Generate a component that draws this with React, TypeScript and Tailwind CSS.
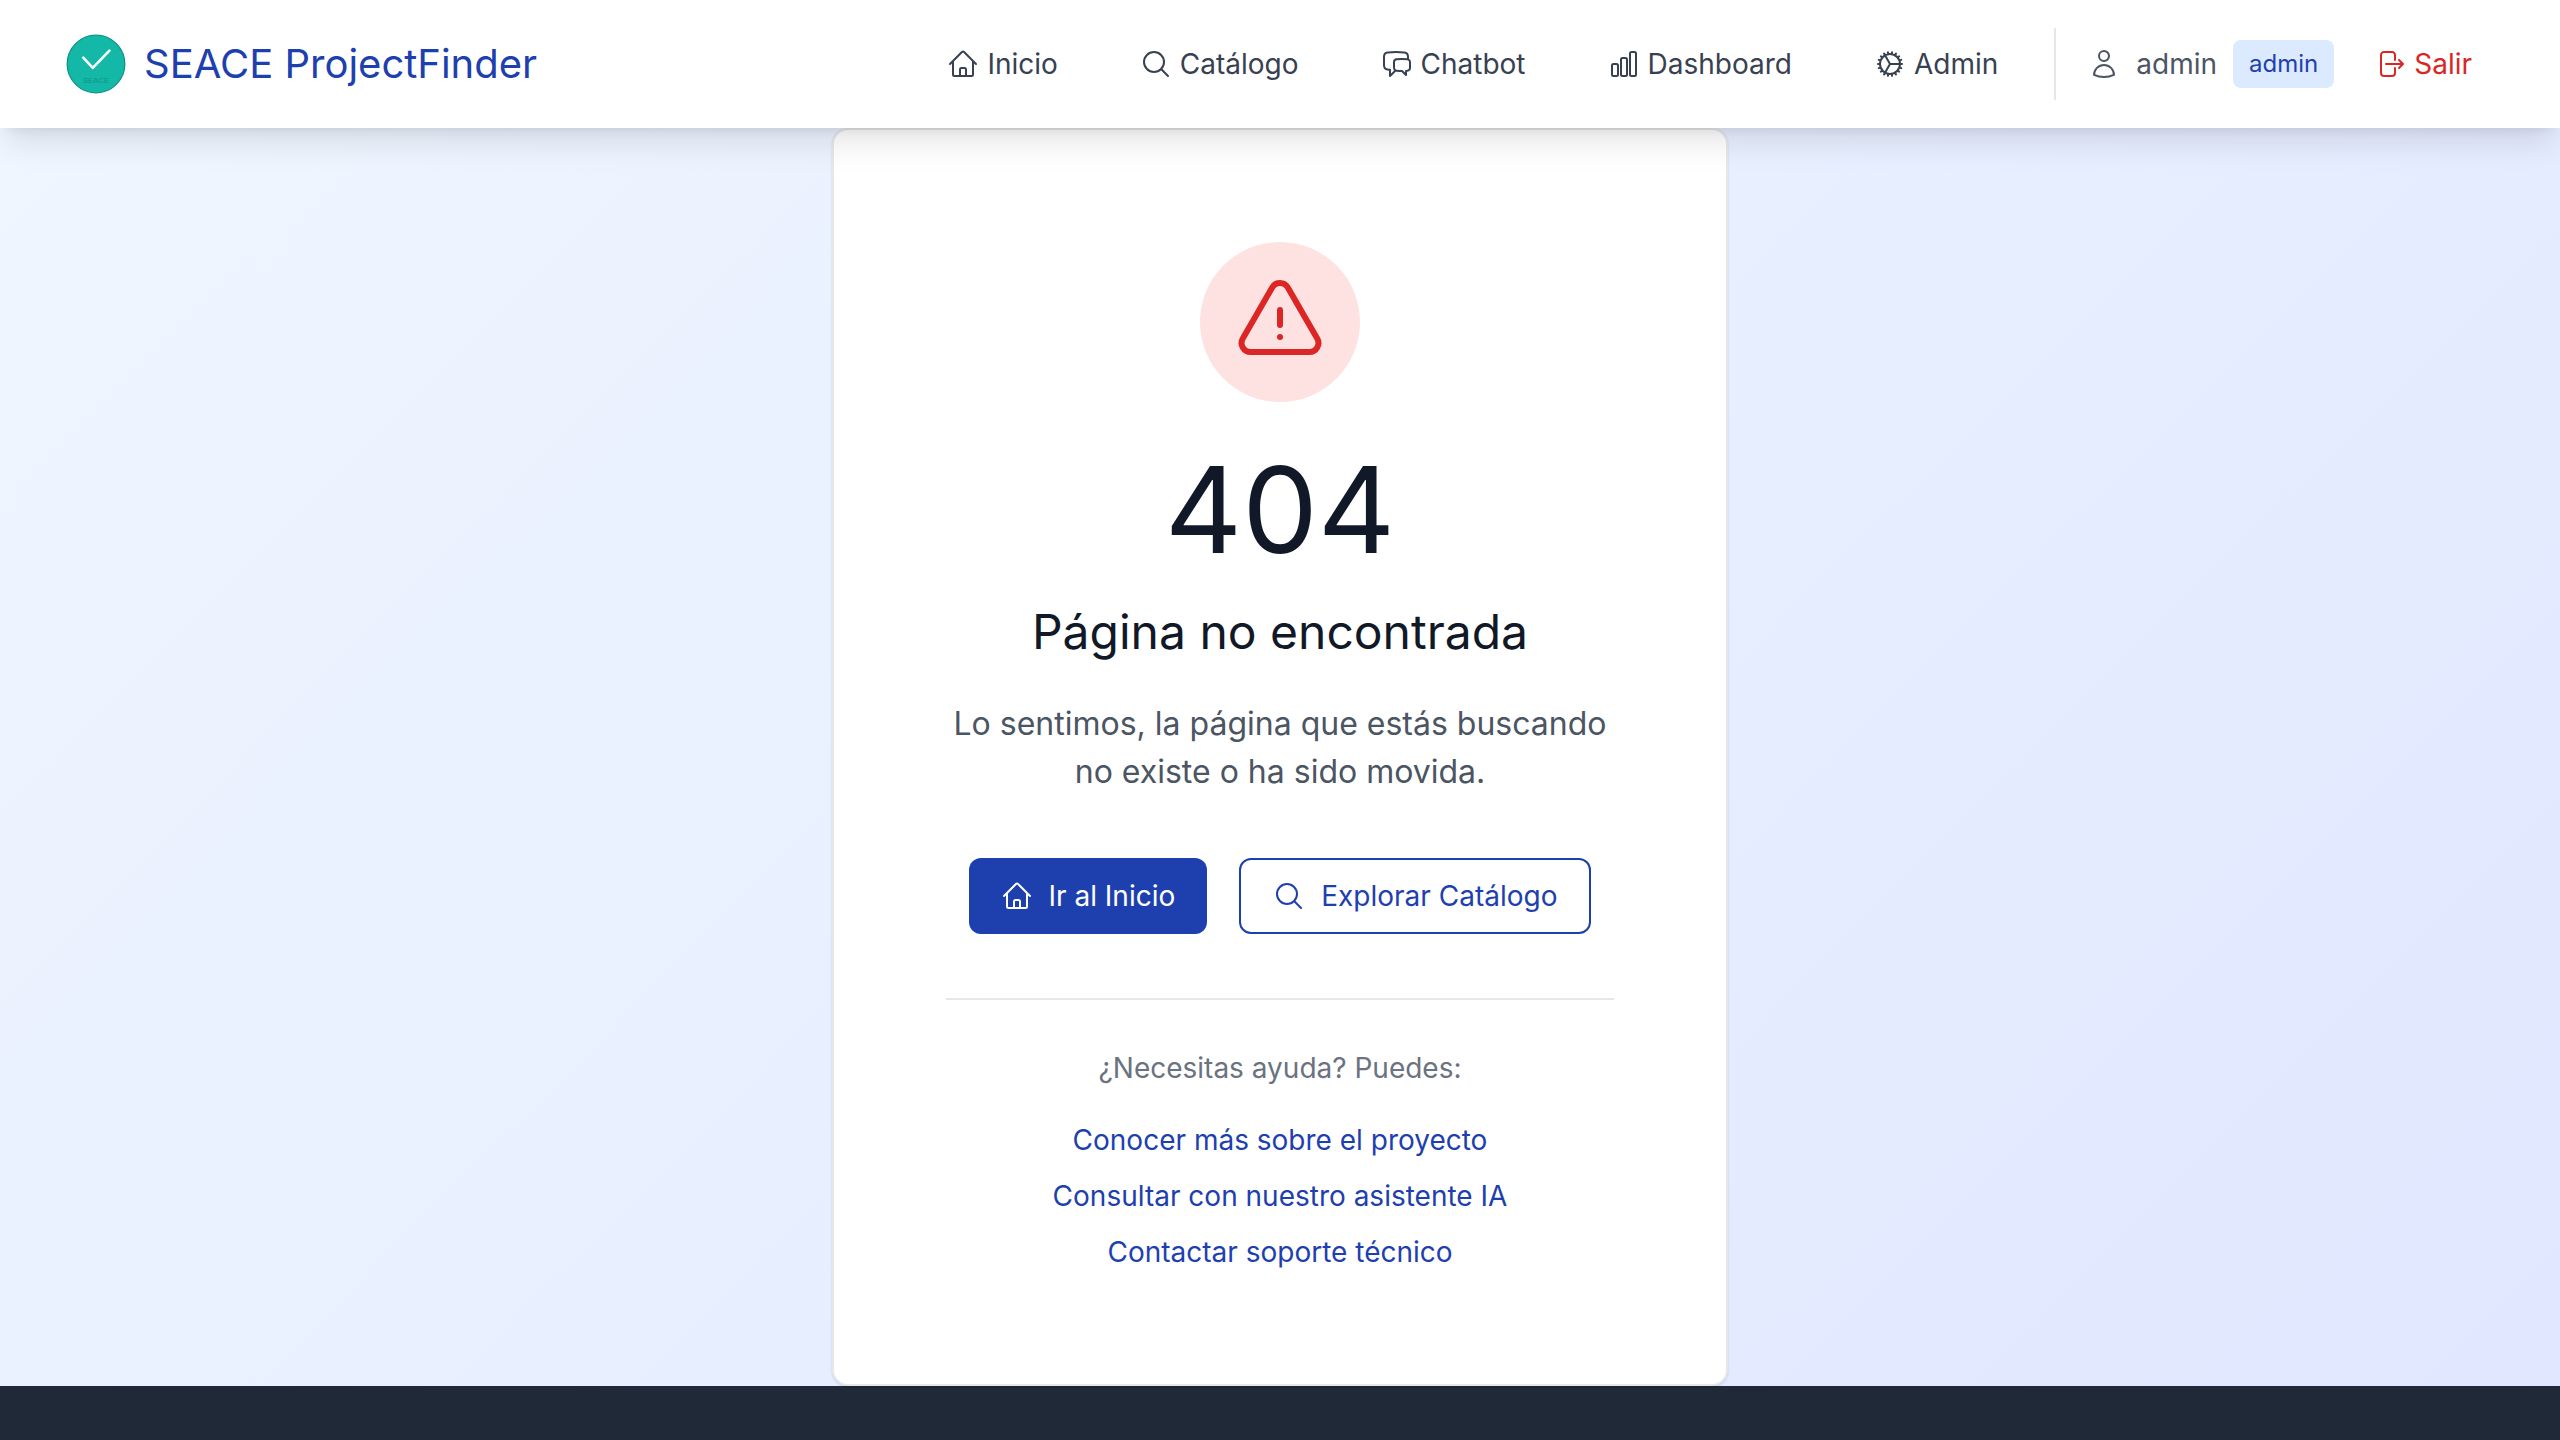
import type { ComponentType, ReactNode } from "react";
import {
  HiOutlineArrowRightOnRectangle,
  HiOutlineChartBar,
  HiOutlineChatBubbleLeftRight,
  HiOutlineCog,
  HiOutlineExclamationTriangle,
  HiOutlineHome,
  HiOutlineMagnifyingGlass,
  HiOutlineUser,
} from "react-icons/hi2";

type Icon = ComponentType<{ className?: string }>;

const navItems: { label: string; icon: Icon }[] = [
  { label: "Inicio", icon: HiOutlineHome },
  { label: "Catálogo", icon: HiOutlineMagnifyingGlass },
  { label: "Chatbot", icon: HiOutlineChatBubbleLeftRight },
  { label: "Dashboard", icon: HiOutlineChartBar },
  { label: "Admin", icon: HiOutlineCog },
];

const helpLinks = [
  "Conocer más sobre el proyecto",
  "Consultar con nuestro asistente IA",
  "Contactar soporte técnico",
];

function Logo() {
  return (
    <svg viewBox="0 0 100 100" className="size-16" aria-hidden="true">
      <circle cx="50" cy="50" r="45" fill="#14b8a6" stroke="#0d9488" strokeWidth="2" />
      <path
        d="M30 40L45 56L71 29"
        fill="none"
        stroke="#fff"
        strokeWidth="4"
        strokeLinecap="round"
        strokeLinejoin="round"
      />
      <text x="50" y="80" textAnchor="middle" fontSize="12" fill="#0d9488" className="font-['Liberation_Sans',sans-serif]">
        SEACE
      </text>
    </svg>
  );
}

function NavLink({ icon: IconShape, children }: { icon: Icon; children: ReactNode }) {
  return (
    <a href="#" className="flex items-center gap-2 rounded-lg px-8 py-4 text-[28px] leading-10 text-[#374151]">
      <IconShape className="size-8" />
      {children}
    </a>
  );
}

function Header() {
  return (
    <header className="relative z-10 flex items-center justify-between bg-white px-16 py-7 shadow-[0_20px_30px_-6px_rgba(0,0,0,0.1),0_8px_12px_-8px_rgba(0,0,0,0.1)]">
      <a href="#" className="flex items-center gap-4 text-[40px] leading-14 text-[#1e40af]">
        <Logo />
        SEACE ProjectFinder
      </a>
      <div className="flex items-center">
        <nav className="flex items-center gap-[18px]">
          {navItems.map((item) => (
            <NavLink key={item.label} icon={item.icon}>
              {item.label}
            </NavLink>
          ))}
        </nav>
        <div className="ml-6 flex items-center gap-4 border-l-2 border-gray-200 py-3 pl-8 text-[28px] leading-10 text-[#4b5563]">
          <HiOutlineUser className="size-8" />
          admin
          <span className="rounded-lg bg-[#dbeafe] px-4 py-1 text-2xl leading-10 text-[#1e40af]">admin</span>
          <button type="button" className="flex items-center gap-2 px-6 text-[#dc2626]">
            <HiOutlineArrowRightOnRectangle className="size-8" />
            Salir
          </button>
        </div>
      </div>
    </header>
  );
}

export default function App() {
  return (
    <div className="flex min-h-screen flex-col bg-[#1f2937] font-[Inter,sans-serif] [font-optical-sizing:none]">
      <Header />
      <main className="flex justify-center bg-[linear-gradient(135deg,#eff6ff_0%,#e0e7ff_100%)]">
        <section className="w-full max-w-[896px] rounded-2xl border-2 border-gray-200 bg-white px-28 py-28 text-center shadow-sm">
          <div className="mx-auto flex size-40 items-center justify-center rounded-full bg-[#fee2e2]">
            <HiOutlineExclamationTriangle className="size-24 text-[#dc2626]" />
          </div>
          <h1 className="mt-12 text-[120px] leading-30 text-[#111827]">404</h1>
          <h2 className="mt-8 text-5xl leading-15 text-[#111827]">Página no encontrada</h2>
          <p className="mt-[38px] text-[32px] leading-12 text-[#4b5563]">
            Lo sentimos, la página que estás buscando no existe o ha sido movida.
          </p>
          <div className="mt-[62px] flex flex-wrap justify-center gap-8 text-[28px] leading-10">
            <a href="#" className="flex items-center gap-4 rounded-xl bg-[#1e40af] px-8 py-4 text-white">
              <HiOutlineHome className="size-8" />
              Ir al Inicio
            </a>
            <a href="#" className="flex items-center gap-4 rounded-xl border-2 border-[#1e40af] px-8 py-4 text-[#1e40af]">
              <HiOutlineMagnifyingGlass className="size-8" />
              Explorar Catálogo
            </a>
          </div>
          <div className="mt-16 border-t-2 border-gray-200 pt-12 text-[28px] leading-10">
            <p className="text-[#6b7280]">¿Necesitas ayuda? Puedes:</p>
            <ul className="mt-8 flex flex-col items-center gap-4">
              {helpLinks.map((label) => (
                <li key={label}>
                  <a href="#" className="text-[#1e40af]">
                    {label}
                  </a>
                </li>
              ))}
            </ul>
          </div>
        </section>
      </main>
      <footer className="bg-[#1f2937]" />
    </div>
  );
}
